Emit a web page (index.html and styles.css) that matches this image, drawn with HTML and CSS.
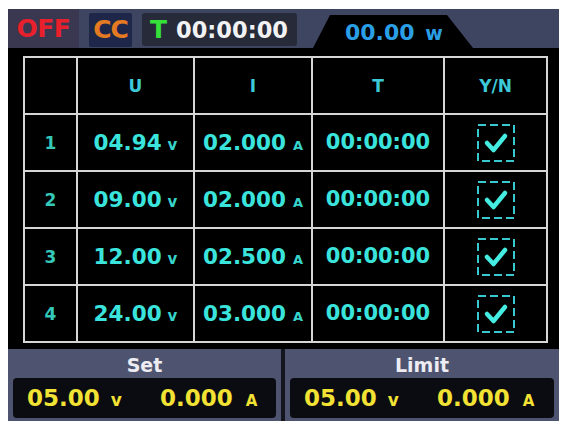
FILE: index.html
```html
<!DOCTYPE html>
<html>
<head>
<meta charset="utf-8">
<link rel="stylesheet" href="styles.css">
</head>
<body>
<div class="screen">
  <div class="header">
    <div class="off">OFF</div>
    <div class="cc">CC</div>
    <div class="timer"><span class="t">T</span><span class="time">00:00:00</span></div>
    <div class="tab">00.00 <span class="wu">w</span></div>
  </div>
  <div class="body">
    <div class="grid">
      <div class="cell"></div>
      <div class="cell head">U</div>
      <div class="cell head">I</div>
      <div class="cell head">T</div>
      <div class="cell head">Y/N</div>

      <div class="cell num">1</div>
      <div class="cell val">04.94<span class="unit">v</span></div>
      <div class="cell val">02.000<span class="unit ua">A</span></div>
      <div class="cell val tm">00:00:00</div>
      <div class="cell"><svg class="chk" viewBox="0 0 38 38" width="38" height="38"><rect x="1" y="1" width="36" height="36" fill="none" stroke="#38c8d0" stroke-width="2" stroke-dasharray="8 4"/><path d="M10 19 L16.5 26 L28 12" fill="none" stroke="#44ece2" stroke-width="4.5" stroke-linecap="round" stroke-linejoin="round"/></svg></div>

      <div class="cell num">2</div>
      <div class="cell val">09.00<span class="unit">v</span></div>
      <div class="cell val">02.000<span class="unit ua">A</span></div>
      <div class="cell val tm">00:00:00</div>
      <div class="cell"><svg class="chk" viewBox="0 0 38 38" width="38" height="38"><rect x="1" y="1" width="36" height="36" fill="none" stroke="#38c8d0" stroke-width="2" stroke-dasharray="8 4"/><path d="M10 19 L16.5 26 L28 12" fill="none" stroke="#44ece2" stroke-width="4.5" stroke-linecap="round" stroke-linejoin="round"/></svg></div>

      <div class="cell num">3</div>
      <div class="cell val">12.00<span class="unit">v</span></div>
      <div class="cell val">02.500<span class="unit ua">A</span></div>
      <div class="cell val tm">00:00:00</div>
      <div class="cell"><svg class="chk" viewBox="0 0 38 38" width="38" height="38"><rect x="1" y="1" width="36" height="36" fill="none" stroke="#38c8d0" stroke-width="2" stroke-dasharray="8 4"/><path d="M10 19 L16.5 26 L28 12" fill="none" stroke="#44ece2" stroke-width="4.5" stroke-linecap="round" stroke-linejoin="round"/></svg></div>

      <div class="cell num">4</div>
      <div class="cell val">24.00<span class="unit">v</span></div>
      <div class="cell val">03.000<span class="unit ua">A</span></div>
      <div class="cell val tm">00:00:00</div>
      <div class="cell"><svg class="chk" viewBox="0 0 38 38" width="38" height="38"><rect x="1" y="1" width="36" height="36" fill="none" stroke="#38c8d0" stroke-width="2" stroke-dasharray="8 4"/><path d="M10 19 L16.5 26 L28 12" fill="none" stroke="#44ece2" stroke-width="4.5" stroke-linecap="round" stroke-linejoin="round"/></svg></div>
    </div>
  </div>
  <div class="footer">
    <div class="panel">
      <div class="label">Set</div>
      <div class="box"><span class="grp">05.00<span class="yu">v</span></span><span class="grp2">0.000<span class="yu ya">A</span></span></div>
    </div>
    <div class="divider"></div>
    <div class="panel">
      <div class="label">Limit</div>
      <div class="box"><span class="grp">05.00<span class="yu">v</span></span><span class="grp2">0.000<span class="yu ya">A</span></span></div>
    </div>
  </div>
</div>
</body>
</html>
```
FILE: styles.css
```css
html, body {
  margin: 0;
  padding: 0;
  background: #ffffff;
}
body {
  padding: 9px 0 0 8px;
  font-family: "DejaVu Sans", "Liberation Sans", sans-serif;
  font-weight: bold;
}
.screen {
  width: 551px;
  height: 412px;
  background: #000;
  display: flex;
  flex-direction: column;
}
.header {
  height: 39px;
  background: #3e4560;
  display: flex;
  align-items: stretch;
}
.off {
  width: 71px;
  background: #3a3750;
  color: #e8202c;
  font-size: 25px;
  line-height: 39px;
  text-align: center;
  letter-spacing: -0.5px;
}
.cc {
  margin: 4px 0 1px 10px;
  width: 43px;
  background: #1e2649;
  color: #e47a22;
  font-size: 25px;
  line-height: 34px;
  text-align: center;
  border-radius: 2px;
  letter-spacing: -1px;
}
.timer {
  margin: 4px 0 2px 10px;
  width: 155px;
  background: #272a38;
  border-radius: 3px;
  display: flex;
  align-items: center;
  padding-left: 8px;
  box-sizing: border-box;
}
.t {
  color: #36e23a;
  font-size: 25px;
}
.time {
  color: #f2f2f4;
  font-size: 22.5px;
  margin-left: 9px;
}
.tab {
  margin: 6px 0 0 16px;
  width: 160px;
  background: #000;
  clip-path: polygon(17px 0, 134px 0, 160px 100%, 0 100%);
  color: #2a9fe6;
  font-size: 22px;
  line-height: 35px;
  padding-left: 32px;
  box-sizing: border-box;
}
.wu {
  font-size: 19px;
  margin-left: 3px;
}
.body {
  flex: 1;
  padding: 8px 0 6px 15px;
}
.grid {
  width: 525px;
  height: 287px;
  box-sizing: border-box;
  background: #d6d6d6;
  padding: 2px;
  display: grid;
  grid-template-columns: 51px 115px 116px 130px 101px;
  grid-template-rows: repeat(5, 55px);
  gap: 2px;
}
.cell {
  background: #000;
  display: flex;
  align-items: center;
  justify-content: center;
  color: #38e0d8;
}
.head {
  font-size: 17px;
  color: #3ccad8;
}
.num {
  font-size: 17px;
  color: #34c8b8;
}
.val {
  font-size: 21.5px;
  color: #3ae4dc;
  align-items: baseline;
  line-height: 55px;
}
.tm {
  font-size: 21px;
}
.unit {
  font-size: 15px;
  margin-left: 6px;
  color: #36d4cc;
}
.ua {
  font-size: 13px;
  margin-left: 7px;
}
.chk {
  display: block;
}
.footer {
  height: 72px;
  background: #4e5470;
  display: grid;
  grid-template-columns: 273px 4px 274px;
}
.divider {
  background: #15151f;
}
.panel {
  display: flex;
  flex-direction: column;
}
.label {
  height: 29px;
  line-height: 33px;
  text-align: center;
  color: #ececf2;
  font-size: 19px;
}
.box {
  margin: 0 5px;
  height: 40px;
  background: #0b0b12;
  border-radius: 4px;
  display: flex;
  align-items: baseline;
  padding-left: 14px;
  line-height: 40px;
  color: #f2e233;
  font-size: 23px;
}
.grp {
  flex: none;
  width: 133px;
}
.grp2 {
  flex: none;
}
.yu {
  font-size: 17px;
  margin-left: 11px;
}
.ya {
  font-size: 15px;
  margin-left: 13px;
}
```
